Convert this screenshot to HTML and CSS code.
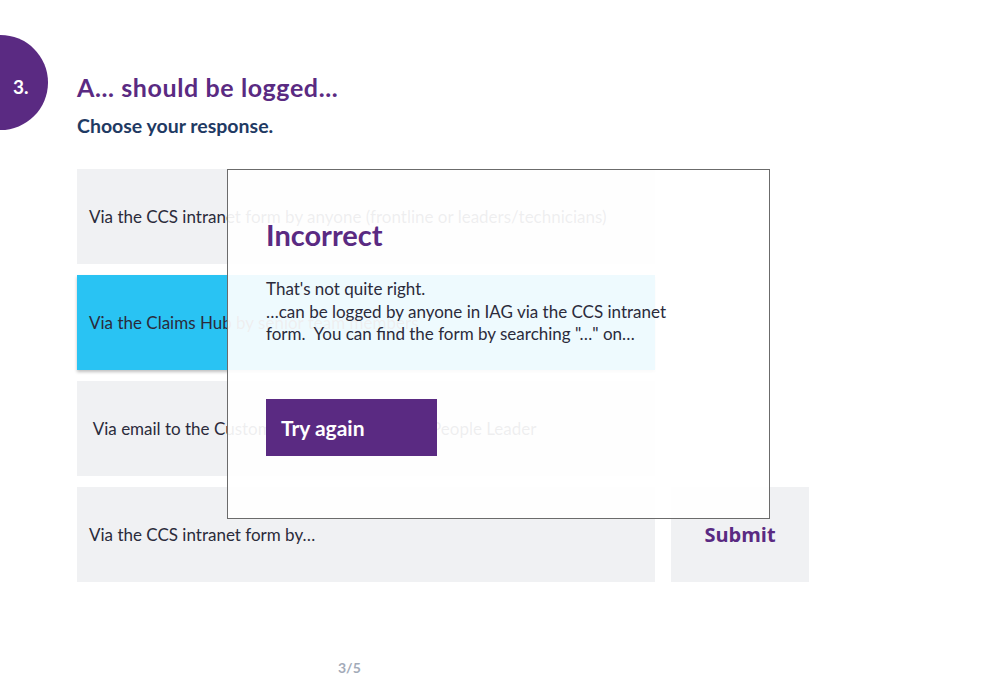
FILE: index.html
```html
<!DOCTYPE html>
<html lang="en">
<head>
  <meta charset="UTF-8">
  <title>Question 3</title>
  <link rel="stylesheet" href="styles.css">
</head>
<body>
  <div class="badge">3.</div>

  <div class="page">
    <h1 class="title">A... should be logged...</h1>
    <p class="prompt">Choose your response.</p>

    <div class="options">
      <div class="option">Via the CCS intranet form by anyone (frontline or leaders/technicians)</div>
      <div class="option selected">Via the Claims Hub by senior team members</div>
      <div class="option">&nbsp;Via email to the Customer Care team by your People Leader</div>
      <div class="last-row">
        <div class="option">Via the CCS intranet form by…</div>
        <div class="submit">Submit</div>
      </div>
    </div>

    <div class="pager">3/5</div>

    <div class="feedback">
      <h2 class="feedback-title">Incorrect</h2>
      <p class="feedback-text">That's not quite right.<br>…can be logged by anyone in IAG via the CCS intranet form.&nbsp; You can find the form by searching "…" on…</p>
      <button class="retry">Try again</button>
    </div>
  </div>
</body>
</html>
```

FILE: styles.css
```css
body {
  margin: 0;
  font-family: 'Lato', 'Noto Sans', sans-serif;
  background: #ffffff;
  color: #2b2b3b;
}
.badge {
  position: absolute;
  left: -47px;
  top: 35px;
  width: 95px;
  height: 95px;
  border-radius: 50%;
  background: #5a2a82;
  color: white;
  font-weight: bold;
  font-size: 19px;
  display: flex;
  align-items: center;
  padding: 8px 0 0 60px;
  box-sizing: border-box;
}
.page {
  position: relative;
  padding: 70px 0 0 77px;
}
.title {
  margin: 0;
  font-size: 25px;
  letter-spacing: 0.6px;
  color: #5a2a82;
  line-height: 34px;
}
.prompt {
  margin: 9px 0 0 0;
  font-size: 19.5px;
  font-weight: bold;
  color: #1f3a63;
  line-height: 26px;
}
.options {
  display: flex;
  flex-direction: column;
  gap: 11px;
  margin-top: 30px;
  width: 732px;
}
.option {
  width: 578px;
  height: 95px;
  box-sizing: border-box;
  padding-left: 12px;
  display: flex;
  align-items: center;
  background: #f0f1f3;
  font-size: 17px;
}
.option.selected {
  background: #29c3f3;
  box-shadow: 0 2px 3px rgba(0, 0, 0, 0.25);
}
.last-row {
  display: flex;
  gap: 16px;
}
.submit {
  width: 138px;
  height: 95px;
  display: flex;
  align-items: center;
  justify-content: center;
  background: #f0f1f3;
  font-family: 'Open Sans', sans-serif;
  font-weight: bold;
  font-size: 20px;
  color: #5a2a82;
}
.pager {
  margin: 77px 0 0 261px;
  font-size: 14px;
  font-weight: bold;
  color: #a3abb9;
}
.feedback {
  position: absolute;
  left: 227px;
  top: 169px;
  width: 543px;
  height: 350px;
  box-sizing: border-box;
  border: 1px solid #6b6b6b;
  background: rgba(255, 255, 255, 0.92);
  padding: 48px 38px 0 38px;
}
.feedback-title {
  margin: 0;
  font-size: 29px;
  color: #5a2a82;
  line-height: 34px;
}
.feedback-text {
  margin: 26px 0 0 0;
  font-size: 17px;
  line-height: 22.5px;
  width: 420px;
  color: #2b2b3b;
}
.retry {
  margin-top: 53px;
  width: 171px;
  height: 57px;
  border: none;
  background: #5a2a82;
  color: white;
  font-family: 'Lato', sans-serif;
  font-weight: bold;
  font-size: 21px;
  text-align: left;
  padding-left: 15px;
}
```
